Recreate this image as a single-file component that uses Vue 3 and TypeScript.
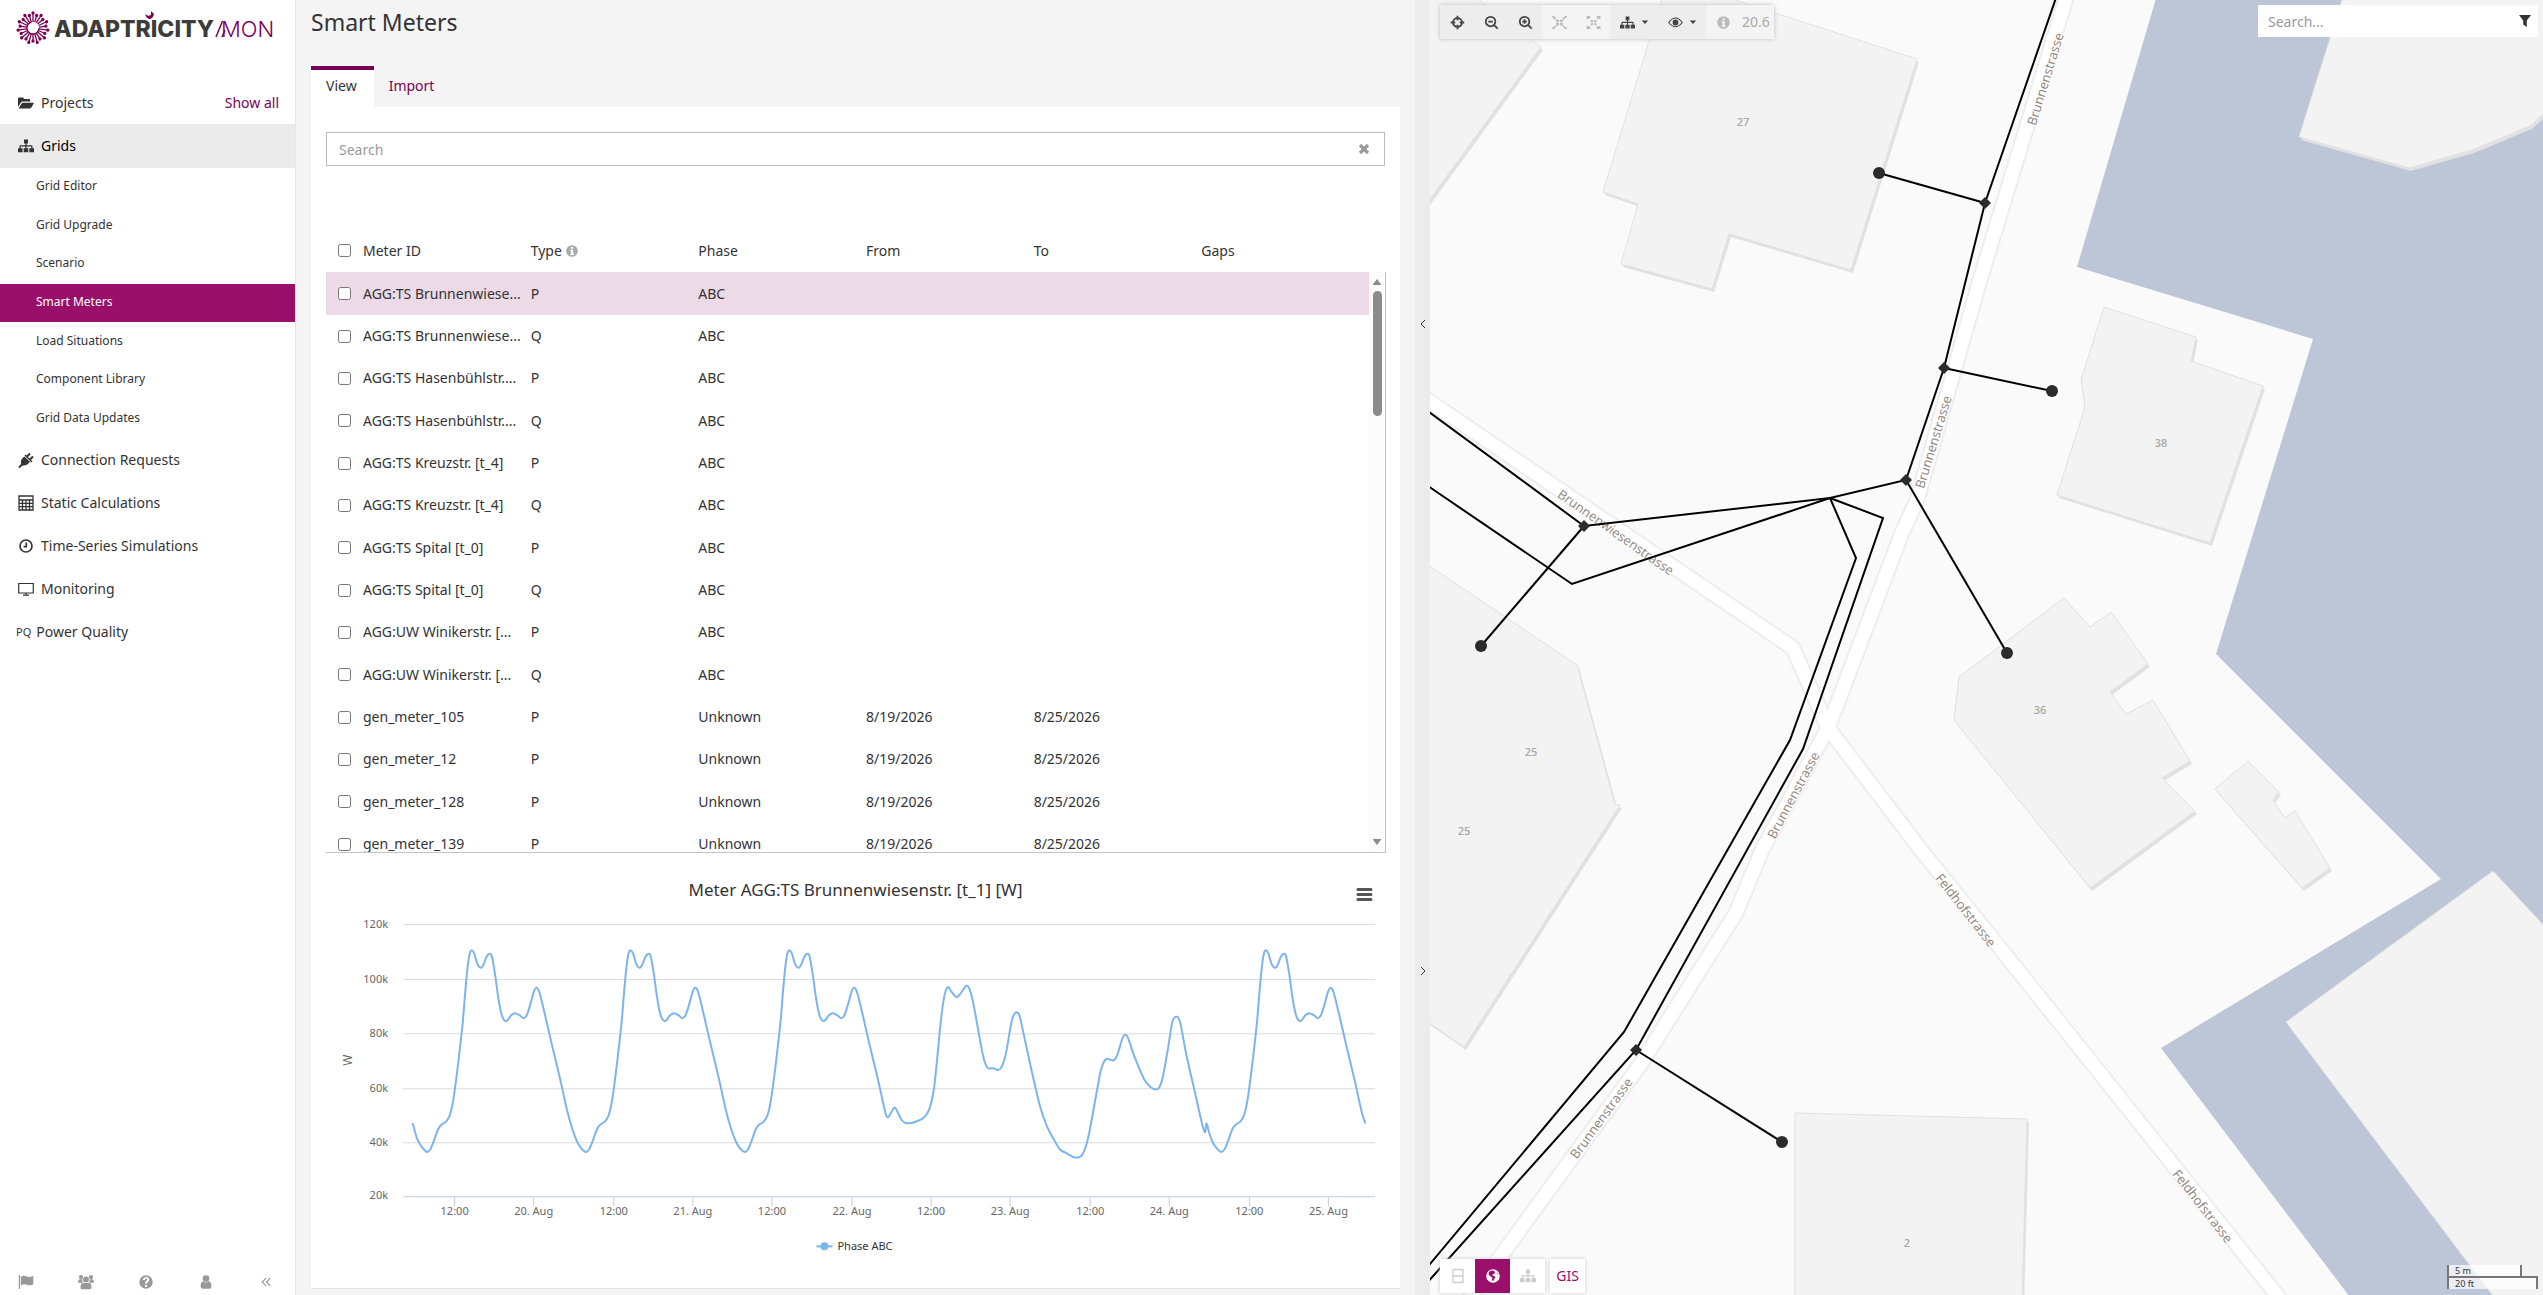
<script setup lang="ts">
import { h, ref } from 'vue'

interface Glyph {
  fill?: string
  line?: string
  width?: number
}

const glyphs: Record<string, Glyph> = {
  folder: { fill: 'M0 12V3.6Q0 2.4 1.2 2.4H4.6Q5.8 2.4 5.8 3.6V4H11Q12.2 4 12.2 5.2V6.6H4.6Q3.4 6.6 2.7 7.7ZM.6 13.6L3.6 8.4Q4 7.7 4.8 7.7H15.4Q16.2 7.7 15.7 8.5L13.2 12.8Q12.7 13.6 11.8 13.6Z' },
  sitemap: { fill: 'M6 1.5h4v4H8.6v1.7h5.1q.8 0 .8.8v2.3H16v4h-4.6v-4h1.9V8.4H8.6v1.9h1.7v4H5.7v-4h1.7V8.4H2.7v1.9h1.9v4H0v-4h1.5V8q0-.8.8-.8h5.1V5.5H6z' },
  plug: { fill: 'M3.6 12.9C2 10 3 7.6 5.2 5.6L6.4 4.5 12 10.1 10.6 11.2C8.4 13.4 6 14 3.6 12.9ZM6.500 3.4l1-1 7 7-1 1z', line: 'M9 4.5L12 1.5M12 7.5L15 4.5M4.3 12.2L1 15.5', width: 2 },
  calculator: { line: 'M1 1H15V15H1ZM1 5H15M4.500 5V15M8 5V15M11.5 5V15M1 8.3H15M1 11.6H15', width: 1.3 },
  clock: { line: 'M8 2A6 6 0 1 1 8 14A6 6 0 1 1 8 2M8.3 4.6V8.6H5.6', width: 1.7 },
  monitor: { line: 'M.7 2.5H15.3V12H.7ZM5 14.2H11M8 12V14.2', width: 1.2 },
  flag: { fill: 'M.8 1H2V15H.8ZM2.8 2.8C5.5 1.2 7 1.8 8.8 2.6S12.5 3.2 15.3 1.8V10.2C12.5 11.7 10.8 11.5 9 10.7S5.500 10 2.8 11.5Z' },
  users: { fill: 'M3 1a2.1 2.1 0 1 1 0 4.2A2.1 2.1 0 1 1 3 1M13 1a2.1 2.1 0 1 1 0 4.2A2.1 2.1 0 1 1 13 1M8 2.5a3 3 0 1 1 0 6A3 3 0 1 1 8 2.5M0 8.8Q0 5.3 2 5.3H4.3Q4 7.5 5.3 8.8ZM16 8.8Q16 5.3 14 5.3H11.7Q12 7.5 10.7 8.8ZM2.5 13.5Q2.5 9 5 9H11Q13.5 9 13.5 13.5Q13.5 15.2 12 15.2H4Q2.5 15.2 2.5 13.5Z' },
  help: { fill: 'M8 1.3a6.7 6.7 0 1 1 0 13.4A6.7 6.7 0 1 1 8 1.3M7 11v2h2v-2zM5 6h2c0-2 2.2-1.8 2.2-.6C9.2 6.7 7 6.800 7 9.8H9C9 8 11.3 7.8 11.3 5.4C11.3 2.3 5 2.1 5 6' },
  info: { fill: 'M8 1.3a6.7 6.7 0 1 1 0 13.4A6.7 6.7 0 1 1 8 1.3M7 3.5v2h2.2v-2zM6 6.7v1.4h1v3.1H6v1.4h4.3v-1.4h-1V6.7z' },
  user: { fill: 'M8 1.3a3.3 3.3 0 1 1 0 6.6A3.3 3.3 0 1 1 8 1.3M2.6 12.4Q2.6 7.6 5.2 7.3Q8 9.6 10.8 7.3Q13.4 7.6 13.4 12.4Q13.4 14.7 11.4 14.7H4.6Q2.6 14.7 2.6 12.4Z' },
  rewind: { line: 'M8 4.2L4.2 8L8 11.8M12.3 4.2L8.5 8L12.3 11.8', width: 1.2 },
  close: { line: 'M4 4L12 12M12 4L4 12', width: 3.2 },
  target: { line: 'M8 3.2A4.8 4.8 0 1 1 8 12.8A4.8 4.8 0 1 1 8 3.2M8 .8V5.6M8 10.4V15.2M.8 8H5.6M10.4 8H15.2', width: 1.9 },
  zoomOut: { line: 'M7 1.9A5.1 5.1 0 1 1 7 12.1A5.1 5.1 0 1 1 7 1.9M10.8 10.8L14.6 14.6M4.6 7H9.4', width: 1.9 },
  zoomIn: { line: 'M7 1.9A5.1 5.1 0 1 1 7 12.1A5.1 5.1 0 1 1 7 1.9M10.8 10.8L14.6 14.6M4.6 7H9.4M7 4.6V9.4', width: 1.9 },
  collapse: { fill: 'M4.5 5h3v2.7h-3zM8.5 5h3v2.7h-3zM4.5 8.6h3v2.7h-3zM8.5 8.6h3v2.7h-3zM.3 1h2.400v2H.3zM13.3 1h2.4v2h-2.4zM.3 13h2.400v2H.3zM13.3 13h2.4v2h-2.4z', line: 'M1.500 2L4.5 4.8M14.5 2L11.5 4.8M1.5 14L4.5 11.3M14.5 14L11.5 11.3', width: 1.5 },
  expand: { fill: 'M5 5.3h2.5v2.3H5zM8.7 5.3h2.5v2.3H8.7zM5 8.7h2.5V11H5zM8.7 8.7h2.5V11H8.7zM.5 1h4v3h-4zM11.5 1h4v3h-4zM.5 12h4v3h-4zM11.5 12h4v3h-4z' },
  eye: { fill: 'M8 4.9a3.1 3.1 0 1 1 0 6.2A3.1 3.1 0 1 1 8 4.9', line: 'M.7 8Q8-1.5 15.3 8Q8 17 .7 8Z', width: 1.2 },
  caret: { fill: 'M1.500 5H14.500L8 12Z' },
  filter: { fill: 'M2 2H14L9.8 7.5V14L6.2 11.5V7.5Z' },
  split: { line: 'M3 1.5H13V14.5H3ZM3 8H13', width: 1.3 },
  globe: { fill: 'M8 1.2a6.8 6.8 0 1 1 0 13.6A6.8 6.8 0 1 1 8 1.2M3.8 4.2L3.6 6.5L5.5 8.6L7.3 9.5L7 12L8.2 13.2L9.3 11L10.5 9.2L8.8 7.7L7 7.4L8.3 5.9L10.3 5L9 2.8L6 2.6ZM11.3 4.5L12.8 6.5L13.2 5.5Z' },
}

const Icon = (props: { name: string }) => {
  const g = glyphs[props.name]
  return h('svg', { viewBox: '0 0 16 16', class: 'icon', 'aria-hidden': 'true' }, [
    g.fill ? h('path', { d: g.fill, fill: 'currentColor', 'fill-rule': 'evenodd' }) : null,
    g.line ? h('path', { d: g.line, fill: 'none', stroke: 'currentColor', 'stroke-width': g.width }) : null,
  ])
}
Icon.props = ['name']

const gridPages = ['Grid Editor', 'Grid Upgrade', 'Scenario', 'Smart Meters', 'Load Situations', 'Component Library', 'Grid Data Updates']
const modules = [
  { label: 'Connection Requests', icon: 'plug' },
  { label: 'Static Calculations', icon: 'calculator' },
  { label: 'Time-Series Simulations', icon: 'clock' },
  { label: 'Monitoring', icon: 'monitor' },
]
const footerActions = [
  { label: 'Feedback', icon: 'flag' },
  { label: 'Team', icon: 'users' },
  { label: 'Help', icon: 'help' },
  { label: 'Account', icon: 'user' },
  { label: 'Collapse menu', icon: 'rewind' },
]

interface Meter {
  id: string
  type: string
  phase: string
  from?: string
  to?: string
}
const agg = (id: string): Meter[] => ['P', 'Q'].map((type) => ({ id, type, phase: 'ABC' }))
const gen = (n: number): Meter => ({ id: `gen_meter_${n}`, type: 'P', phase: 'Unknown', from: '8/19/2026', to: '8/25/2026' })
const meters: Meter[] = [
  ...agg('AGG:TS Brunnenwiese...'),
  ...agg('AGG:TS Hasenbühlstr....'),
  ...agg('AGG:TS Kreuzstr. [t_4]'),
  ...agg('AGG:TS Spital [t_0]'),
  ...agg('AGG:UW Winikerstr. [...'),
  ...[105, 12, 128, 139].map(gen),
]
const meterQuery = ref('')
const mapQuery = ref('')

/* Load curve, in chart units; a day is 158.7 units wide. */
type Pt = [number, number]
const dayWidth = 158.7
const start: Pt[] = [[86.5, 262.7], [91, 278.3], [96.5, 287.7]]
const day: Pt[] = [
  [101, 291.7], [104, 289.3], [108, 280], [112, 269], [115.5, 264.3], [119.7, 261.7], [123.3, 256], [126, 246],
  [128.6, 230], [132.2, 201.7], [136.5, 163.3], [139, 133.3], [141.5, 106.7], [143.6, 93.3], [145.8, 90.3],
  [148.3, 94], [151, 103.3], [154.4, 107.7], [157.6, 104], [160.4, 96.7], [163.6, 93.7], [165.8, 96.7],
  [169, 115], [172.2, 138.3], [175.8, 155.7], [179.4, 161], [182.2, 159], [185, 155], [189, 153], [193.3, 155],
  [197.2, 158], [200.4, 155.3], [203.6, 146], [207.6, 131.7], [210.4, 127.7], [213.3, 132.7], [218.3, 152.7],
  [225, 181.7], [234, 219.3], [241, 250.7],
]
const dayEnd: Pt[] = [[246.5, 270], [251, 281.7], [255, 288]]
const weekend: Pt[] = [
  [560.9, 257], [563.8, 254], [567.8, 247.3], [571, 251.7], [574.7, 259.3], [579, 262.7], [585, 262.7], [590.3, 261],
  [596.5, 258], [601.2, 252.3], [604.5, 243.3], [607.4, 228.3], [610.3, 201.7], [614, 163.3], [617.6, 136.7],
  [621.2, 127], [625, 131.7], [630, 137], [634.7, 132.3], [639.8, 125.7], [643, 129.3], [647.4, 146.7], [654, 183.3],
  [657.6, 200], [661.2, 207.7], [666.7, 208], [672, 209.7], [675.8, 205], [679.4, 192.7], [684.5, 163.3], [687.4, 154.3],
  [690, 152.3], [693, 156], [697.6, 176.7], [706.7, 218.3], [714, 248.3], [720, 265.3], [726.7, 278.3], [733.2, 289],
  [739.4, 292.7], [746.7, 296.7], [751, 297.3], [755.4, 294.7], [760, 283.3], [764, 265], [770.3, 230], [774.6, 208.3],
  [779.7, 198.7], [786.6, 200.3], [790.6, 194.7], [795.7, 178.3], [798.6, 174.7], [801.5, 178.3], [808.4, 198.3],
  [817.5, 219.3], [823.7, 226.7], [829.2, 229.3], [832.8, 226.7], [836.4, 215], [841.2, 188.3], [845.2, 163.3],
  [849.2, 156.7], [853.2, 161.7], [859.3, 193.3], [868.4, 233.3], [874, 258.3], [877.9, 272], [879.7, 263],
  [882.2, 272.3], [886, 282.3], [890.2, 288.3],
]
const shift = (pts: Pt[], days: number): Pt[] => pts.map(([x, y]) => [x + dayWidth * days, y])
const load: Pt[] = [
  ...start, ...day, ...dayEnd, ...shift(day, 1), ...shift(dayEnd, 1), ...shift(day, 2), ...weekend, ...shift(day, 5),
  [1038.5, 263.3],
]
const smooth = (pts: Pt[]): string =>
  pts.slice(1).reduce((d, p, i) => {
    const a = pts[i]
    const before = pts[i - 1] ?? a
    const after = pts[i + 2] ?? p
    const c = [a[0] + (p[0] - before[0]) / 6, a[1] + (p[1] - before[1]) / 6, p[0] - (after[0] - a[0]) / 6, p[1] - (after[1] - a[1]) / 6]
    return `${d}C${c.map((v) => v.toFixed(1)).join(' ')} ${p[0].toFixed(1)} ${p[1]}`
  }, `M${pts[0].join(' ')}`)
const loadPath = smooth(load)
const yTicks = [120, 100, 80, 60, 40].map((k, i) => ({ label: `${k}k`, y: [64, 119, 173, 228, 282][i] + 0.5 }))
const xTicks = ['12:00', '20. Aug', '12:00', '21. Aug', '12:00', '22. Aug', '12:00', '23. Aug', '12:00', '24. Aug', '12:00', '25. Aug'].map(
  (label, i) => ({ label, x: Math.round(128 + i * 79.35) + 0.5 }),
)

/* Map geometry */
const buildings = [
  '1425,-5 1473,-5 1541,47 1425,206',
  '1663,-5 1720,-5 1917,59 1851,270 1729,234 1712,289 1621,264 1638,204 1603,192',
  '2104,307 2196,337 2191,361 2263,386 2210,543 2057,495 2085,407 2081,380',
  '2064,598 2090,627 2111,612 2148,664 2110,692 2126,714 2153,700 2190,761 2162,778 2195,811 2090,888 1954,720 1959,677',
  '2215,789 2248,761 2279,792 2273,800 2285,818 2295,811 2330,868 2302,888',
  '1425,563 1577,665 1615,804 1620,805 1464,1047 1425,1020',
  '1795,1113 2027,1119 2022,1305 1795,1305',
  '2386,-5 2342,0 2299,137 2409,168 2472,150 2530,126 2550,108 2550,-5',
  '2493,871 2286,1022 2500,1305 2550,1305 2550,932',
]
const water = '2157,-5 2077,267 2313,339 2216,654 2441,879 2161,1048 2356,1305 2550,1305 2550,-5'
const roads = [
  '2067,-5 1980,280 1917,500 1902,533 1828,728 1762,850 1736,913 1640,1065 1465,1305',
  '1420,395 1793,648 1828,728',
  '1828,728 1921,850 2020,973 2285,1305',
]
const cables = [
  '2057,-5 1985,203 1944,368 1906,480 1830,498 1584,526 1425,409',
  '1584,526 1481,646',
  '1425,484 1572,584 1830,498 1856,558 1790,740 1624,1032 1425,1270',
  '1830,498 1883,518 1803,749 1636,1050 1425,1285',
  '1636,1050 1782,1142',
  '1906,480 2007,653',
  '1985,203 1879,173',
  '1944,368 2052,391',
]
const joints: Pt[] = [[1985, 203], [1944, 368], [1906, 480], [1584, 526], [1636, 1050]]
const consumers: Pt[] = [[1879, 173], [2052, 391], [2007, 653], [1481, 646], [1782, 1142]]
const streets = [
  { name: 'Brunnenstrasse', x: 2045, y: 79, turn: -73 },
  { name: 'Brunnenstrasse', x: 1933, y: 442, turn: -73 },
  { name: 'Brunnenstrasse', x: 1793, y: 795, turn: -62 },
  { name: 'Brunnenstrasse', x: 1601, y: 1118, turn: -54 },
  { name: 'Brunnenwiesenstrasse', x: 1616, y: 532, turn: 35 },
  { name: 'Feldhofstrasse', x: 1966, y: 910, turn: 52 },
  { name: 'Feldhofstrasse', x: 2203, y: 1206, turn: 52 },
]
const houses = [
  { no: 27, x: 1743, y: 121 }, { no: 38, x: 2161, y: 442 }, { no: 36, x: 2040, y: 709 },
  { no: 25, x: 1531, y: 751 }, { no: 25, x: 1464, y: 830 }, { no: 2, x: 1907, y: 1242 },
]
const rays = Array.from({ length: 22 }, (_, i) => i * (360 / 22))
</script>

<template>
  <div class="app">
    <aside class="sidebar">
      <a class="logo" href="#" aria-label="Adaptricity Mon">
        <svg viewBox="0 0 280 50">
          <g v-for="(r, i) in rays" :key="r" :transform="`rotate(${r} 33 28)`" stroke="#7a0055" stroke-width="1.3">
            <path :d="i % 2 ? 'M33 22V16' : 'M33 22V13'" />
            <circle cx="33" :cy="i % 2 ? 15 : 13" r="1" fill="#7a0055" />
          </g>
          <circle cx="33" cy="28" r="6" fill="none" stroke="#7a0055" stroke-width="1.3" stroke-dasharray="26 12" />
          <text class="brand" x="54" y="37">ADAPTRICITY</text>
          <text class="product" x="221" y="37">MON</text>
          <path d="M216 37L222.5 21M222 37L225 30" stroke="#7a0055" stroke-width="1.5" />
          <path d="M145 14Q148 17 151 15L151 11L154 14Q153 19 149 19Q146 18 145 14Z" fill="#7a0055" />
        </svg>
      </a>
      <nav>
        <div class="item">
          <a href="#"><Icon name="folder" />Projects</a>
          <a class="all" href="#">Show all</a>
        </div>
        <div class="item open"><a href="#"><Icon name="sitemap" />Grids</a></div>
        <ul class="pages">
          <li v-for="p in gridPages" :key="p" :class="{ current: p === 'Smart Meters' }"><a href="#">{{ p }}</a></li>
        </ul>
        <div v-for="m in modules" :key="m.label" class="item"><a href="#"><Icon :name="m.icon" />{{ m.label }}</a></div>
        <div class="item pq"><a href="#"><small>PQ</small>Power Quality</a></div>
      </nav>
      <footer>
        <button v-for="a in footerActions" :key="a.label" :aria-label="a.label"><Icon :name="a.icon" /></button>
      </footer>
    </aside>

    <main class="content">
      <h1>Smart Meters</h1>
      <div class="tabs">
        <a class="active" href="#">View</a>
        <a href="#">Import</a>
      </div>
      <section class="card">
        <div class="search">
          <input v-model="meterQuery" type="text" placeholder="Search" aria-label="Search meters" />
          <button aria-label="Clear search"><Icon name="close" /></button>
        </div>

        <div class="list">
          <div class="rows">
            <table>
              <colgroup><col class="pick" /><col v-for="n in 6" :key="n" /></colgroup>
              <thead>
                <tr>
                  <th><input type="checkbox" aria-label="Select all meters" /></th>
                  <th>Meter ID</th>
                  <th>Type <Icon name="info" /></th>
                  <th>Phase</th>
                  <th>From</th>
                  <th>To</th>
                  <th>Gaps</th>
                </tr>
              </thead>
              <tbody>
                <tr v-for="(m, i) in meters" :key="i" :class="{ picked: i === 0 }">
                  <td><input type="checkbox" :aria-label="`Select ${m.id} ${m.type}`" /></td>
                  <td>{{ m.id }}</td>
                  <td>{{ m.type }}</td>
                  <td>{{ m.phase }}</td>
                  <td>{{ m.from }}</td>
                  <td>{{ m.to }}</td>
                  <td></td>
                </tr>
              </tbody>
            </table>
          </div>
          <div class="scrollbar" aria-hidden="true"><i class="up"></i><i class="thumb"></i><i class="down"></i></div>
        </div>

        <svg class="chart" viewBox="0 0 1059 410" role="img" aria-label="Meter load in watts">
          <text class="title" x="529" y="36">Meter AGG:TS Brunnenwiesenstr. [t_1] [W]</text>
          <path d="M1031 29.5h13M1031 34.5h13M1031 39.5h13" stroke="#555" stroke-width="3" stroke-linecap="round" />
          <g v-for="t in yTicks" :key="t.label">
            <path :d="`M77 ${t.y}H1048`" stroke="#dcdadd" />
            <text class="tick" x="62" :y="t.y + 3" text-anchor="end">{{ t.label }}</text>
          </g>
          <text class="tick" x="62" y="339" text-anchor="end">20k</text>
          <path d="M77 336.5H1048" stroke="#c0cce2" />
          <g v-for="t in xTicks" :key="t.x">
            <path :d="`M${t.x} 337V346`" stroke="#c0cce2" />
            <text class="tick" :x="t.x" y="355" text-anchor="middle">{{ t.label }}</text>
          </g>
          <text class="unit" transform="translate(26 200) rotate(-90)" text-anchor="middle">W</text>
          <path :d="loadPath" fill="none" stroke="#7cb5ec" stroke-width="2" stroke-linejoin="round" />
          <path d="M490 386H506" stroke="#7cb5ec" stroke-width="2" />
          <circle cx="498" cy="386" r="4" fill="#7cb5ec" />
          <text class="legend" x="511" y="390">Phase ABC</text>
        </svg>
      </section>
    </main>

    <div class="splitter">
      <button aria-label="Shrink panel"><svg viewBox="0 0 6 10"><path d="M5 1L1 5L5 9" /></svg></button>
      <button aria-label="Grow panel"><svg viewBox="0 0 6 10"><path d="M1 1L5 5L1 9" /></svg></button>
    </div>

    <section class="map">
      <svg class="canvas" viewBox="1430 0 1113 1295" preserveAspectRatio="xMinYMin slice">
        <polygon :points="water" fill="#bcc6d7" />
        <g v-for="b in buildings" :key="b">
          <polygon :points="b" transform="translate(2 3)" fill="#e2e1e1" />
          <polygon :points="b" fill="#f3f3f3" stroke="#e2e0e0" />
        </g>
        <g fill="none" stroke-linejoin="round">
          <polyline v-for="r in roads" :key="r" :points="r" stroke="#ededed" stroke-width="17" />
          <polyline v-for="r in roads" :key="r" :points="r" stroke="#fff" stroke-width="13" />
        </g>
        <text v-for="s in streets" :key="s.x" class="street" :transform="`translate(${s.x} ${s.y}) rotate(${s.turn})`">{{ s.name }}</text>
        <text v-for="n in houses" :key="n.x" class="house" :x="n.x" :y="n.y">{{ n.no }}</text>
        <polyline v-for="c in cables" :key="c" :points="c" fill="none" stroke="#000" stroke-width="2" />
        <path v-for="j in joints" :key="j[0]" :d="`M${j[0]} ${j[1] - 6}l6 6l-6 6l-6 -6z`" fill="#2b2b2b" />
        <circle v-for="c in consumers" :key="c[0]" :cx="c[0]" :cy="c[1]" r="6" fill="#2b2b2b" />
      </svg>

      <div class="toolbar">
        <button aria-label="Centre"><Icon name="target" /></button>
        <button aria-label="Zoom out"><Icon name="zoomOut" /></button>
        <button aria-label="Zoom in"><Icon name="zoomIn" /></button>
        <button aria-label="Collapse" disabled><Icon name="collapse" /></button>
        <button aria-label="Expand" disabled><Icon name="expand" /></button>
        <button class="menu" aria-label="Layout"><Icon name="sitemap" /><Icon name="caret" class="caret" /></button>
        <button class="menu" aria-label="Visibility"><Icon name="eye" /><Icon name="caret" class="caret" /></button>
        <button aria-label="Details" disabled><Icon name="info" /></button>
        <span class="level">20.6</span>
      </div>

      <div class="find">
        <input v-model="mapQuery" type="text" placeholder="Search..." aria-label="Search map" />
        <button aria-label="Filter"><Icon name="filter" /></button>
      </div>

      <div class="modes">
        <div class="group">
          <button aria-label="Split view"><Icon name="split" /></button>
          <button class="on" aria-label="Map view"><Icon name="globe" /></button>
          <button aria-label="Schematic view"><Icon name="sitemap" /></button>
        </div>
        <button class="gis">GIS</button>
      </div>

      <div class="scale">
        <span class="metric">5 m</span>
        <span class="imperial">20 ft</span>
      </div>
    </section>
  </div>
</template>

<style>
body {
  margin: 0;
}
</style>

<style scoped>
* {
  box-sizing: border-box;
}
.app {
  display: flex;
  height: 100vh;
  overflow: hidden;
  background: #f4f4f5;
  color: #333;
  font: 14px/20px "Noto Sans", sans-serif;
}
a {
  color: inherit;
  text-decoration: none;
}
button {
  display: flex;
  align-items: center;
  justify-content: center;
  padding: 0;
  border: 0;
  background: none;
  color: inherit;
  font: inherit;
}
input[type='text'] {
  flex: 1;
  min-width: 0;
  height: 100%;
  padding: 0;
  border: 0;
  outline: 0;
  background: none;
  color: inherit;
  font: inherit;
}
input::placeholder {
  color: #999;
}
.icon {
  flex: none;
  width: 16px;
  height: 16px;
}

.sidebar {
  display: flex;
  flex: none;
  flex-direction: column;
  width: 296px;
  border-right: 1px solid #e6e6e8;
  background: #fff;
}
.logo {
  height: 81px;
}
.logo svg {
  display: block;
  width: 280px;
}
.brand {
  fill: #3c3c3b;
  font: 800 23px "Inter", sans-serif;
}
.product {
  fill: #7a0055;
  font: 300 22px "Inter", sans-serif;
}
.item {
  display: flex;
  align-items: center;
  justify-content: space-between;
  height: 43px;
  padding: 0 16px 0 18px;
}
.item a {
  display: flex;
  align-items: center;
  gap: 7px;
}
.item .all {
  color: #7a0055;
}
.item.open {
  height: 44px;
  background: #ebebec;
  color: #000;
}
.item.open .icon {
  color: #333;
}
.pages {
  display: flex;
  flex-direction: column;
  height: 270px;
  margin: 0;
  padding: 0;
  list-style: none;
  font-size: 12px;
}
.pages li {
  display: flex;
  flex: 1;
  align-items: center;
  padding: 0 0 2px 36px;
}
.pages .current {
  background: #990f6a;
  color: #fff;
}
.item.pq {
  padding-left: 16px;
}
.pq a {
  gap: 5px;
}
.pq small {
  font-size: 11px;
}
footer {
  display: flex;
  justify-content: space-between;
  margin-top: auto;
  padding: 0 21px 5px 18px;
  color: #999;
}

.content {
  display: flex;
  flex: 1089 1 0;
  flex-direction: column;
  min-width: 0;
  padding: 0 15px 6px;
}
h1 {
  margin: 7px 0 29px;
  font-weight: 400;
  font-size: 23px;
  line-height: 30px;
}
.tabs {
  display: flex;
}
.tabs a {
  padding: 6px 17px 11px 15px;
  border-top: 4px solid transparent;
  color: #7a0055;
}
.tabs .active {
  border-color: #7a0055;
  background: #fff;
  color: #333;
}
.card {
  flex: 1;
  padding: 25px 14px 0 15px;
  border-bottom: 1px solid #e2e2e4;
  background: #fff;
}
.search {
  display: flex;
  align-items: center;
  height: 34px;
  margin-right: 1px;
  padding: 0 12px;
  border: 1px solid #bbb;
}
.search button {
  color: #999;
}
.list {
  display: flex;
  height: 624px;
  margin-top: 63px;
  border-bottom: 1px solid #c4c4c6;
}
.rows {
  flex: 1;
  overflow: hidden;
}
table {
  width: 100%;
  border-collapse: collapse;
  table-layout: fixed;
}
.pick {
  width: 37px;
}
tr {
  height: 42px;
}
thead tr,
tbody tr:nth-child(3n + 1) {
  height: 43px;
}
th,
td {
  padding: 0;
  font-weight: 400;
  text-align: left;
  white-space: nowrap;
}
th .icon {
  width: 14px;
  height: 14px;
  color: #aaa;
  vertical-align: -2px;
}
td input,
th input {
  display: block;
  width: 13px;
  height: 13px;
  margin: 0 0 0 12px;
}
.picked {
  background: #ecdae6;
}
.scrollbar {
  display: flex;
  flex-direction: column;
  align-items: center;
  width: 17px;
  margin-top: 43px;
  padding: 7px 0;
  border-right: 1px solid #c4c4c6;
  background: #fcfcfc;
}
.scrollbar i {
  width: 9px;
  background: #8b8b8b;
}
.up,
.down {
  height: 6px;
}
.up {
  clip-path: polygon(50% 0, 100% 100%, 0 100%);
}
.down {
  margin-top: auto;
  clip-path: polygon(0 0, 100% 0, 50% 100%);
}
.thumb {
  height: 125px;
  margin-top: 6px;
  border-radius: 5px;
}
.chart {
  display: block;
  width: 100%;
  margin-top: 7px;
}
.title {
  fill: #333;
  font-size: 17px;
  text-anchor: middle;
}
.tick {
  fill: #666;
  font-size: 11px;
}
.unit {
  fill: #666;
  font-size: 12px;
}
.legend {
  fill: #333;
  font-size: 11px;
}

.splitter {
  display: flex;
  flex: none;
  flex-direction: column;
  justify-content: space-around;
  width: 15px;
  background: #ececee;
}
.splitter svg {
  width: 6px;
  height: 10px;
  fill: none;
  stroke: #333;
}

.map {
  position: relative;
  flex: 1113 1 0;
  min-width: 0;
  background: #fafafa;
}
.canvas {
  display: block;
  width: 100%;
  height: 100%;
}
.street {
  fill: #8f8479;
  stroke: #fff;
  stroke-width: 2px;
  paint-order: stroke;
  font: 13px "Open Sans", sans-serif;
  dominant-baseline: central;
  text-anchor: middle;
}
.house {
  fill: #a8a8a8;
  font: 600 11px "Open Sans", sans-serif;
  dominant-baseline: central;
  text-anchor: middle;
}
.toolbar {
  position: absolute;
  top: 5px;
  left: 10px;
  display: flex;
  background: #f4f4f4;
  box-shadow: 0 0 4px #bbb;
  color: #444;
}
.toolbar button {
  width: 34px;
  height: 34px;
  background: #ededed;
}
.toolbar button:disabled {
  background: none;
  color: #bbb;
}
.toolbar .icon {
  width: 15px;
  height: 15px;
}
.toolbar .menu {
  gap: 6px;
  width: 48px;
}
.toolbar .caret {
  width: 8px;
  height: 8px;
}
.level {
  padding: 7px 4px 7px 2px;
  color: #aaa;
}
.find {
  position: absolute;
  top: 5px;
  right: 5px;
  display: flex;
  align-items: center;
  width: 280px;
  height: 32px;
  padding: 0 5px 0 10px;
  background: #fff;
}
.modes {
  position: absolute;
  bottom: 2px;
  left: 10px;
  display: flex;
  gap: 5px;
  color: #ccc;
}
.group {
  display: flex;
}
.group,
.gis {
  background: #fff;
  box-shadow: 0 0 4px #ccc;
}
.modes button {
  width: 35px;
  height: 34px;
}
.modes .on {
  background: #990f6a;
  color: #fff;
}
.modes .gis {
  background: #fff;
  color: #990f6a;
}
.scale {
  position: absolute;
  right: 5px;
  bottom: 6px;
  width: 91px;
  font-size: 9px;
  line-height: 11px;
}
.scale span {
  display: block;
  padding-left: 6px;
  border: 2px solid #777;
  background: rgba(255, 255, 255, 0.7);
}
.metric {
  width: 75px;
}
.scale .metric {
  border-top: 0;
}
.scale .imperial {
  margin-top: -2px;
  border-bottom: 0;
}
</style>
